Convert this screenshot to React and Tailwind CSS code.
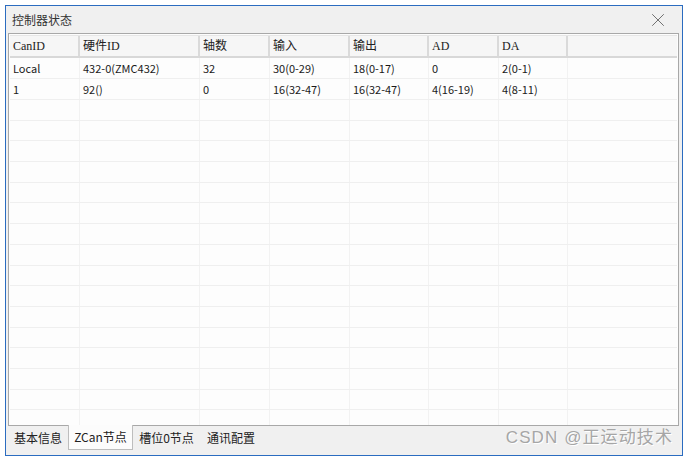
import { X } from "lucide-react";

const cols = [
  { key: "id", title: "CanID", w: "w-[70px]" },
  { key: "hw", title: "硬件ID", w: "w-[120px]" },
  { key: "axis", title: "轴数", w: "w-[70px]" },
  { key: "in", title: "输入", w: "w-[80px]" },
  { key: "out", title: "输出", w: "w-[79px]" },
  { key: "ad", title: "AD", w: "w-[70px]" },
  { key: "da", title: "DA", w: "w-[69px]" },
];

const rows = [
  { id: "Local", hw: "432-0(ZMC432)", axis: "32", in: "30(0-29)", out: "18(0-17)", ad: "0", da: "2(0-1)" },
  { id: "1", hw: "92()", axis: "0", in: "16(32-47)", out: "16(32-47)", ad: "4(16-19)", da: "4(8-11)" },
];

const tabs = [
  { label: "基本信息", w: "w-[60px]" },
  { label: "ZCan节点", w: "w-[65px]", active: true },
  { label: "槽位0节点", w: "w-[67px]" },
  { label: "通讯配置", w: "w-[62px]" },
];

function App() {
  const filler = Array(16).fill(null);

  return (
    <div className="w-[688px] h-[460px] bg-white p-[5px] font-['Noto_Sans_CJK_SC',sans-serif]">
      <div className="relative w-[678px] h-[451px] border border-[#2b6cc0] bg-[#f0f0f0] flex flex-col">
        {/* title bar */}
        <div className="h-[27px] flex items-center justify-between pl-[6px] pr-[13px]">
          <span className="text-[12px] text-[#333]">控制器状态</span>
          <X size={22} strokeWidth={0.9} className="text-[#555]" />
        </div>

        {/* table panel */}
        <div className="ml-[2px] w-[671px] h-[393px] border border-[#a8a8a8] bg-[#fdfdfd] p-px overflow-hidden">
          <div className="flex h-[23px] bg-[#f6f6f6] border-t border-[#e6e6e6] border-b-2 border-b-[#d8d8d8] w-[667px] font-['Liberation_Serif','Noto_Sans_CJK_SC',serif] text-[12px] text-[#222]">
            {cols.map((c) => (
              <div key={c.key} className={`${c.w} shrink-0 flex items-center pl-[3px] border-r-2 border-[#dadada]`}>
                {c.title}
              </div>
            ))}
            <div className="flex-1" />
          </div>

          {rows.map((r, i) => (
            <div key={i} className="flex h-[21px] border-b border-[#efefef] text-[11px] text-[#1a1a1a]">
              {cols.map((c) => (
                <div key={c.key} className={`${c.w} shrink-0 flex items-center pl-[3px] border-r border-[#f2f2f2]`}>
                  {r[c.key]}
                </div>
              ))}
              <div className="flex-1" />
            </div>
          ))}

          {filler.map((_, i) => (
            <div key={i} className="flex h-[20.7px] border-b border-[#efefef]">
              {cols.map((c) => (
                <div key={c.key} className={`${c.w} shrink-0 border-r border-[#f2f2f2]`} />
              ))}
              <div className="flex-1" />
            </div>
          ))}
        </div>

        {/* tabs */}
        <div className="flex pl-[2px] h-[24px] text-[12px] text-[#222]">
          {tabs.map((t) => (
            <div
              key={t.label}
              className={`${t.w} flex items-center justify-center ${
                t.active ? "bg-[#fcfcfc] border-l border-r border-b border-[#bdbdbd] -mt-px" : ""
              }`}
            >
              {t.label}
            </div>
          ))}
        </div>

        <div className="absolute right-[9px] bottom-[5px] text-[17px] text-[#a6a6a6] font-['Liberation_Sans','Noto_Sans_CJK_SC',sans-serif] tracking-[1.1px] [text-shadow:1px_1px_0_#fff]">
          CSDN @正运动技术
        </div>
      </div>
    </div>
  );
}

export default App;
